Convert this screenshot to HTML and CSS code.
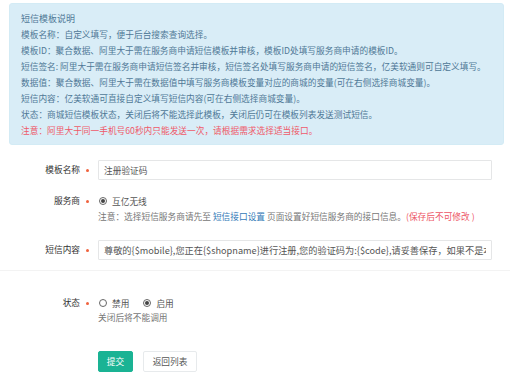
FILE: index.html
```html
<!DOCTYPE html>
<html lang="zh-CN">
<head>
  <meta charset="UTF-8">
  <title>短信模板</title>
  <link rel="stylesheet" href="styles.css">
</head>
<body>
  <div class="alert">
    <div class="alert-title">短信模板说明</div>
    <p>模板名称：自定义填写，便于后台搜索查询选择。</p>
    <p>模板ID：聚合数据、阿里大于需在服务商申请短信模板并审核，模板ID处填写服务商申请的模板ID。</p>
    <p>短信签名: 阿里大于需在服务商申请短信签名并审核，短信签名处填写服务商申请的短信签名，亿美软通则可自定义填写。</p>
    <p>数据值：聚合数据、阿里大于需在数据值中填写服务商模板变量对应的商城的变量(可在右侧选择商城变量)。</p>
    <p>短信内容：亿美软通可直接自定义填写短信内容(可在右侧选择商城变量)。</p>
    <p>状态：商城短信模板状态，关闭后将不能选择此模板，关闭后仍可在模板列表发送测试短信。</p>
    <p class="text-danger">注意：阿里大于同一手机号60秒内只能发送一次，请根据需求选择适当接口。</p>
  </div>

  <form class="form">
    <div class="form-row row-name">
      <label class="label">模板名称</label>
      <span class="req"></span>
      <div class="control">
        <input class="input" type="text" value="注册验证码">
      </div>
    </div>

    <div class="form-row row-line">
      <label class="label">服务商</label>
      <span class="req"></span>
      <div class="control">
        <div class="radios">
          <span class="radio checked"></span><span class="radio-text">互亿无线</span>
        </div>
        <div class="help">注意：选择短信服务商请先至 <a href="#">短信接口设置</a> 页面设置好短信服务商的接口信息。<span class="text-danger">(保存后不可修改 )</span></div>
      </div>
    </div>

    <div class="form-row row-content">
      <label class="label">短信内容</label>
      <span class="req"></span>
      <div class="control">
        <input class="input input-wide" type="text" value="尊敬的{$mobile},您正在{$shopname}进行注册,您的验证码为:{$code},请妥善保存，如果不是本人操作请忽略此短信。">
      </div>
    </div>

    <div class="divider"></div>

    <div class="form-row row-line row-status">
      <label class="label">状态</label>
      <span class="req"></span>
      <div class="control">
        <div class="radios">
          <span class="radio"></span><span class="radio-text">禁用</span>
          <span class="radio checked"></span><span class="radio-text">启用</span>
        </div>
        <div class="help help-tight">关闭后将不能调用</div>
      </div>
    </div>

    <div class="actions">
      <button type="button" class="btn btn-primary">提交</button>
      <button type="button" class="btn btn-default">返回列表</button>
    </div>
  </form>
</body>
</html>
```

FILE: styles.css
```css
body {
  margin: 0;
  font-family: "Noto Sans CJK SC", "Noto Sans", sans-serif;
  font-size: 8.7px;
  color: #555;
  background-color: #fff;
}
p {
  margin: 0;
}
a {
  color: #337ab7;
  text-decoration: none;
}
.text-danger {
  color: #ed5565;
}
.alert {
  margin: 3px 6px 0 9px;
  padding: 7px 11px;
  background-color: #d9edf7;
  border: 1px solid #d3ebf5;
  border-radius: 3px;
  color: #4f7896;
  line-height: 16px;
  box-sizing: border-box;
  height: 142px;
}
.alert-title {
  font-size: 9px;
}
.alert .text-danger {
  color: #ef5a6a;
}
.form-row {
  display: flex;
  align-items: flex-start;
}
.label {
  width: 80px;
  text-align: right;
  color: #333;
  line-height: 20px;
}
.req {
  width: 3px;
  height: 3px;
  border-radius: 50%;
  background-color: #f0623d;
  margin: 9px 9px 0 6px;
}
.control {
  flex: none;
}
.input {
  display: block;
  width: 394px;
  height: 20px;
  box-sizing: border-box;
  padding: 0 5px;
  border: 1px solid #e5e6e7;
  border-radius: 1px;
  font-family: inherit;
  font-size: 8.7px;
  color: #555;
  outline: none;
}
.input-wide {
  font-size: 9.2px;
}
.row-name {
  margin-top: 15px;
}
.row-line {
  margin-top: 13px;
}
.row-line .label {
  line-height: 16px;
}
.row-line .req {
  margin-top: 7px;
}
.row-content {
  margin-top: 15px;
}
.radios {
  display: flex;
  align-items: center;
  height: 16px;
  color: #555;
}
.radio {
  width: 8px;
  height: 8px;
  box-sizing: border-box;
  border: 1px solid #666;
  border-radius: 50%;
  margin: 0 5px 0 1px;
  display: flex;
  align-items: center;
  justify-content: center;
}
.radio.checked::before {
  content: "";
  width: 4px;
  height: 4px;
  border-radius: 50%;
  background-color: #444;
}
.radio-text {
  margin-right: 13px;
}
.help {
  line-height: 16px;
  color: #777;
}
.help-tight {
  line-height: 14px;
}
.divider {
  margin-top: 10px;
  height: 1px;
  background-color: #f3f3f3;
}
.row-status {
  margin-top: 24px;
}
.actions {
  margin: 26px 0 0 98px;
  display: flex;
  gap: 10px;
}
.btn {
  height: 21px;
  padding: 0 7px;
  border-radius: 2px;
  font-family: inherit;
  font-size: 8.7px;
  cursor: pointer;
}
.btn-primary {
  width: 35px;
  background-color: #1ab394;
  border: 1px solid #1ab394;
  color: #fff;
}
.btn-default {
  width: 54px;
  background-color: #fff;
  border: 1px solid #e7eaec;
  color: #555;
}
```
